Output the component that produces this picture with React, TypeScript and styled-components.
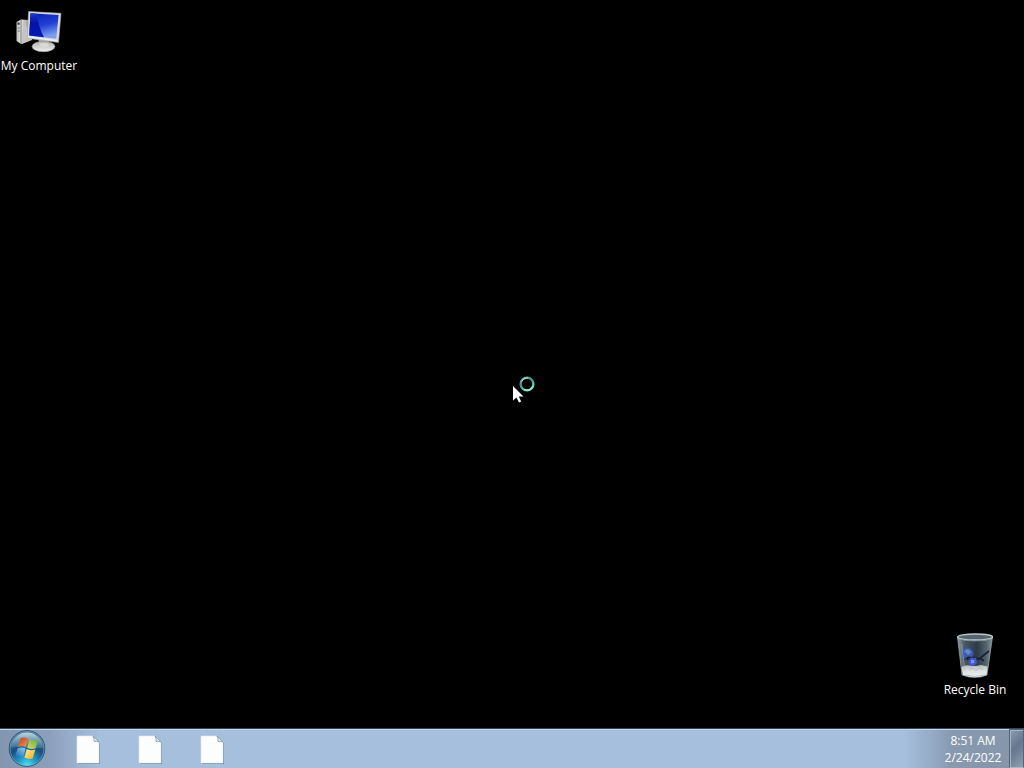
import React from "react";
import styled, { createGlobalStyle } from "styled-components";

const GlobalStyle = createGlobalStyle`
  *, *::before, *::after { box-sizing: border-box; }
  body {
    margin: 0;
    background: #000;
    font-family: "Open Sans", "Noto Sans", sans-serif;
    font-size: 12px;
  }
  button { font: inherit; border: 0; padding: 0; background: none; cursor: default; }
`;

const Screen = styled.div`
  display: flex;
  flex-direction: column;
  min-height: 100vh;
  overflow: hidden;
`;

const Desktop = styled.main`
  position: relative;
  flex: 1;
  background: #000;
`;

const Shortcut = styled.button<{ $corner: "start" | "end" }>`
  position: absolute;
  ${(p) => (p.$corner === "start" ? "left: 0; top: 8px;" : "right: 10px; bottom: 30px;")}
  display: flex;
  flex-direction: column;
  align-items: center;
  gap: 2px;
  width: 78px;
  color: #fff;
  line-height: 16px;
  white-space: nowrap;
`;

const Pointer = styled.div`
  position: absolute;
  left: 50%;
  top: 376px;
  display: flex;
`;

const Taskbar = styled.footer`
  display: flex;
  align-items: stretch;
  height: 40px;
  border-top: 1px solid #34485c;
  box-shadow: inset 0 1px 0 #c3d5e6;
  background:
    linear-gradient(90deg, #8296b0 0, #8b9fba 48px, #a5bedb00 100px),
    linear-gradient(270deg, #8696aa 0, #8799b0 72px, #94abc6 92px, #a6c0de00 120px),
    #a6bfdc;
`;

const StartButton = styled.button`
  display: flex;
  align-items: center;
  justify-content: center;
  width: 54px;
`;

const Pinned = styled.nav`
  display: flex;
  flex: 1;
  padding-left: 3px;
`;

const PinnedButton = styled.button`
  display: flex;
  align-items: center;
  justify-content: center;
  width: 62px;
  padding-top: 2px;
`;

const Clock = styled.button`
  display: flex;
  flex-direction: column;
  align-items: center;
  justify-content: center;
  width: 72px;
  color: #fff;
  line-height: 17px;
`;

const ShowDesktop = styled.button`
  width: 15px;
  border: 1px solid #526478;
  border-bottom-color: #a9b7c8;
  box-shadow: inset 1px 1px 0 #a3b3c6;
  background: linear-gradient(135deg, #8d9caf 0, #66788f 45%, #6f8096 60%, #91a0b2 100%);
`;

const ComputerIcon = () => (
  <svg width="48" height="48" viewBox="0 0 48 48" aria-hidden="true">
    <defs>
      <linearGradient id="screen" x1="0" y1="0" x2="0.3" y2="1">
        <stop offset="0" stopColor="#0a1fb0" />
        <stop offset="0.55" stopColor="#1f3fd4" />
        <stop offset="1" stopColor="#7d9cf0" />
      </linearGradient>
      <linearGradient id="shade" x1="0" y1="0" x2="0" y2="1">
        <stop offset="0" stopColor="#2038c8" />
        <stop offset="0.4" stopColor="#0413a4" />
        <stop offset="1" stopColor="#0618b4" />
      </linearGradient>
      <linearGradient id="tower" x1="0" y1="0" x2="1" y2="0">
        <stop offset="0" stopColor="#b9b9b7" />
        <stop offset="0.35" stopColor="#e7e7e5" />
        <stop offset="1" stopColor="#949492" />
      </linearGradient>
      <linearGradient id="base" x1="0" y1="0" x2="0" y2="1">
        <stop offset="0" stopColor="#b1b1af" />
        <stop offset="1" stopColor="#efefed" />
      </linearGradient>
    </defs>
    <path d="M1.5 14 6 11.5 14 12V33L6 36 1.5 33Z" fill="url(#tower)" />
    <path d="M6 12V36" stroke="#777" strokeWidth="1" />
    <path d="M8 13 17 27V32L7 36Z" fill="#c4c4c2" />
    <circle cx="3.6" cy="15.7" r="1.4" fill="#555" />
    <path d="M2.5 20H5M2.5 23H5" stroke="#777" />
    <path d="M23 30H34L33 38H25Z" fill="#a9a9a7" />
    <ellipse cx="28.5" cy="38.5" rx="11.5" ry="5.2" fill="url(#base)" stroke="#999" strokeWidth="0.5" />
    <path d="M24 36Q29 34 34 36L33 38Q29 40 25 38Z" fill="#d9d9d7" />
    <path d="M13.5 3.5 46 5.3 43.5 34.5 12.3 30.2Z" fill="#d9dbde" stroke="#a4a7aa" strokeWidth="0.6" />
    <path d="M15.5 5.3 43.6 7 41.3 30.8 14.2 27.5Z" fill="url(#screen)" />
    <path d="M15.5 5.3 22 5.7Q23 18 29 29.3L14.2 27.5Z" fill="url(#shade)" />
    <path d="M13.4 28.9 42.5 32.9" stroke="#fff" strokeWidth="0.7" />
  </svg>
);

const BinIcon = () => (
  <svg width="48" height="48" viewBox="0 0 48 48" aria-hidden="true">
    <defs>
      <linearGradient id="glass" x1="0" y1="0" x2="1" y2="0">
        <stop offset="0" stopColor="#929ea1" />
        <stop offset="0.2" stopColor="#4a5863" />
        <stop offset="0.55" stopColor="#2c3946" />
        <stop offset="0.82" stopColor="#54626c" />
        <stop offset="1" stopColor="#88969c" />
      </linearGradient>
      <linearGradient id="paper" x1="0" y1="0" x2="0" y2="1">
        <stop offset="0" stopColor="#b4b9bb" />
        <stop offset="0.5" stopColor="#dfe2e2" />
        <stop offset="1" stopColor="#edf0ef" />
      </linearGradient>
    </defs>
    <path d="M6.5 5 11 43Q24 48 36 43L41.5 5Z" fill="url(#glass)" stroke="#929da1" strokeWidth="0.8" />
    <path d="M10.5 35Q14 32.5 19 33.5T30 33L36.8 34.5 35.5 43Q24 47.5 12 43Z" fill="url(#paper)" />
    <path d="M18 38 21 36 25 38.5 29 35.5 32 38M14 43Q24 46 34 43" fill="none" stroke="#b0b6b7" strokeWidth="0.8" />
    <path d="M13 27 20 25 28 27 38 19M29 26 33 29M13 21 17 28" fill="none" stroke="#17223a" strokeWidth="1.8" />
    <path d="M11 21 12 17 16 15.5 20 17 22.5 21 21 25 17 24 14 27 11.5 25Z" fill="#3d5cb0" />
    <path d="M13 19 17 17 20.5 20 17 23Z" fill="#6686cf" />
    <path d="M17.5 30 20 25.5 25 26 26 31 23 34 19 33.5Z" fill="#4158cc" />
    <path d="M20 28 23.5 28 23 31 20 31.5Z" fill="#7891ed" />
    <ellipse cx="24" cy="5" rx="17.5" ry="3" fill="#56656f" stroke="#b7c8ca" strokeWidth="1.3" />
    <path d="M8 7Q24 11 40 7" fill="none" stroke="#82949b" strokeWidth="0.8" />
    <path d="M10.5 12 14 39" stroke="#acb8b9" strokeWidth="1" opacity="0.5" />
  </svg>
);

const BusyPointer = () => (
  <svg width="24" height="28" viewBox="0 0 24 28" aria-hidden="true">
    <defs>
      <linearGradient id="ring" x1="0" y1="0" x2="0.6" y2="1">
        <stop offset="0" stopColor="#87bcbc" />
        <stop offset="0.45" stopColor="#3e928e" />
        <stop offset="1" stopColor="#75e8c8" />
      </linearGradient>
    </defs>
    <circle cx="15" cy="8" r="6.4" fill="none" stroke="url(#ring)" strokeWidth="2.3" />
    <path d="M9.6 5.5Q12 1.5 16 1.9M12 13.5Q18 15.5 20.8 10.5" fill="none" stroke="#c6f4ea" strokeWidth="0.8" />
    <path d="M1 10V24.5L4.5 21.5 7 26.5 9.2 25.5 6.8 20.5H11.5Z" fill="#fff" />
  </svg>
);

const StartOrb = () => (
  <svg width="38" height="38" viewBox="0 0 38 38" aria-hidden="true">
    <defs>
      <radialGradient id="orb" cx="0.5" cy="0.98" r="0.88">
        <stop offset="0" stopColor="#55e3f5" />
        <stop offset="0.28" stopColor="#209fcb" />
        <stop offset="0.62" stopColor="#175080" />
        <stop offset="1" stopColor="#387094" />
      </radialGradient>
      <linearGradient id="gloss" x1="0" y1="0" x2="0" y2="1">
        <stop offset="0" stopColor="#d6e7ed" stopOpacity="0.85" />
        <stop offset="1" stopColor="#749fb7" stopOpacity="0.3" />
      </linearGradient>
      <linearGradient id="red" x1="0" y1="0" x2="1" y2="1">
        <stop offset="0" stopColor="#c33c1b" />
        <stop offset="1" stopColor="#f49b57" />
      </linearGradient>
      <linearGradient id="green" x1="0" y1="1" x2="1" y2="0">
        <stop offset="0" stopColor="#cddd77" />
        <stop offset="1" stopColor="#6cac2d" />
      </linearGradient>
      <linearGradient id="blue" x1="1" y1="0" x2="0" y2="1">
        <stop offset="0" stopColor="#91d4ef" />
        <stop offset="1" stopColor="#2267b2" />
      </linearGradient>
      <linearGradient id="yellow" x1="0" y1="0" x2="1" y2="1">
        <stop offset="0" stopColor="#fff19a" />
        <stop offset="1" stopColor="#f6a916" />
      </linearGradient>
    </defs>
    <circle cx="19" cy="18.5" r="17.8" fill="url(#orb)" stroke="#284d69" strokeWidth="1" />
    <circle cx="19" cy="18.5" r="17" fill="none" stroke="#94c4d5" strokeWidth="0.7" opacity="0.7" />
    <path d="M2.4 17.5A16.7 16.7 0 0 1 35.6 17.5Q28 19.5 19 17.9T2.4 17.5Z" fill="url(#gloss)" />
    <path d="M12.6 8.3Q16.5 6.4 20.3 8.7L18 17.2Q14 15.2 10 16.9Z" fill="url(#red)" />
    <path d="M21.4 9.4Q25.4 11.6 30.2 9.8L27.7 18.3Q23.3 19.9 19.2 17.7Z" fill="url(#green)" />
    <path d="M9.6 18.2Q13.7 16.5 17.6 18.5L15.3 26.7Q11.5 24.8 7.2 26.4Z" fill="url(#blue)" />
    <path d="M18.8 19Q22.8 21.1 27.3 19.5L24.8 28.3Q20.6 29.9 16.4 27.5Z" fill="url(#yellow)" />
  </svg>
);

const FileIcon = () => (
  <svg width="28" height="32" viewBox="0 0 28 32" aria-hidden="true">
    <path d="M4 3H20L26 9V30H4Z" fill="#5e7288" opacity="0.7" />
    <path d="M3 2H19L25 8V29H3Z" fill="#fcfdfd" stroke="#e0e7ed" strokeWidth="0.6" />
    <path d="M19 2 25 8Q22 6.8 20 7.4Q20.6 5 19 2Z" fill="#e6edf3" stroke="#8096aa" strokeWidth="0.8" />
  </svg>
);

const pinnedFiles = ["First program", "Second program", "Third program"];

export default function App() {
  return (
    <Screen>
      <GlobalStyle />
      <Desktop>
        <Shortcut $corner="start">
          <ComputerIcon />
          <span>My Computer</span>
        </Shortcut>
        <Pointer>
          <BusyPointer />
        </Pointer>
        <Shortcut $corner="end">
          <BinIcon />
          <span>Recycle Bin</span>
        </Shortcut>
      </Desktop>
      <Taskbar>
        <StartButton aria-label="Start">
          <StartOrb />
        </StartButton>
        <Pinned aria-label="Pinned programs">
          {pinnedFiles.map((name) => (
            <PinnedButton key={name} aria-label={name}>
              <FileIcon />
            </PinnedButton>
          ))}
        </Pinned>
        <Clock>
          <span>8:51 AM</span>
          <time dateTime="2022-02-24">2/24/2022</time>
        </Clock>
        <ShowDesktop aria-label="Show desktop" />
      </Taskbar>
    </Screen>
  );
}
